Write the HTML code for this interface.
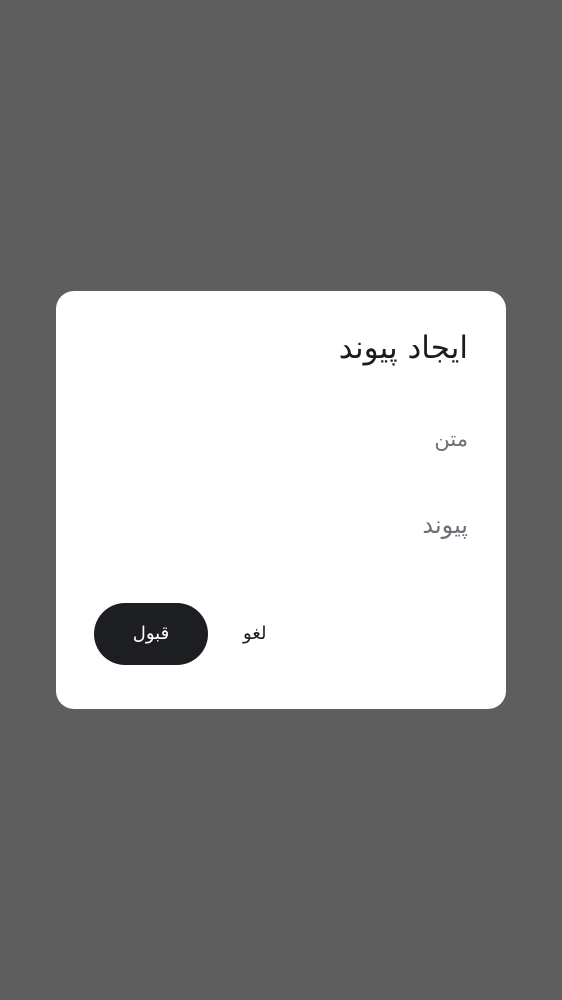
<!DOCTYPE html>
<html dir="rtl"><head><meta charset="utf-8"><style>
html,body{margin:0;padding:0;width:562px;height:1000px;background:#5e5e5e;overflow:hidden;font-family:"DejaVu Sans","Liberation Sans",sans-serif;}
.d{position:absolute;left:56px;top:291px;width:450px;height:418px;background:#fff;border-radius:18px;}
.t{position:absolute;right:38px;top:39px;font-size:31px;color:#1c1b1f;white-space:nowrap;}
.l1{position:absolute;right:38px;top:136px;font-size:21px;color:#6b6f76;}
.l2{position:absolute;right:38px;top:220px;font-size:24px;color:#6b6f76;}
.b{position:absolute;left:38px;top:312px;width:114px;height:62px;border-radius:31px;background:#1d1e22;color:#fff;font-size:18px;text-align:center;line-height:62px;}
.c{position:absolute;left:187px;top:332px;font-size:18px;color:#1c1b1f;}
</style></head><body>
<div class="d">
<div class="t">ایجاد پیوند</div>
<div class="l1">متن</div>
<div class="l2">پیوند</div>
<div class="b">قبول</div>
<div class="c">لغو</div>
</div>
</body></html>
